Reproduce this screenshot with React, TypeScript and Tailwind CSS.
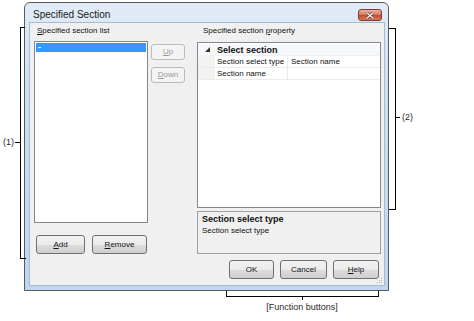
import React from 'react';

const font = { fontFamily: '"Liberation Sans", Arial, sans-serif' };

function Btn({ u, rest, w, disabled }: { u: string; rest: string; w: string; disabled?: boolean }) {
  return (
    <div
      className={
        'h-full flex items-center justify-center rounded-[3px] border text-[8px] ' +
        w +
        (disabled
          ? ' border-[#b8bcbf] bg-[#f4f4f4] text-[#9a9a9a]'
          : ' border-[#707070] bg-[linear-gradient(#f2f2f2_0%,#ebebeb_50%,#dddddd_51%,#cfcfcf_100%)] text-[#111]')
      }
    >
      <span>
        <span className="underline underline-offset-[1px]">{u}</span>
        {rest}
      </span>
    </div>
  );
}

export default function App() {
  return (
    <div className="relative w-[474px] h-[321px] bg-white overflow-hidden text-[#111]" style={font}>
      <div className="pt-[2px] pl-[24px]">
        {/* dialog window */}
        <div className="w-[365px] h-[289px] border border-[#5a5a5a] rounded-t-[6px] bg-[linear-gradient(#e2ecf7,#cfe0f2_30%,#bed6ef)] flex flex-col">
          {/* title bar */}
          <div className="h-[20px] flex items-start justify-between">
            <div className="pl-[8px] pt-[6px] text-[10px] leading-[12px] text-[#1a1a1a]">Specified Section</div>
            <div className="mt-[6px] mr-[6px] w-[24px] h-[12px] rounded-[3px] border border-[#7d3a2c] bg-[linear-gradient(#eab4a3,#d97c63_45%,#c44d30_55%,#da7b5e)] flex items-center justify-center">
              <svg width="8" height="7" viewBox="0 0 8 7">
                <path d="M1 1 L7 6 M7 1 L1 6" stroke="#5a2a20" strokeWidth="2.6" strokeLinecap="square" />
                <path d="M1 1 L7 6 M7 1 L1 6" stroke="#ffffff" strokeWidth="1.4" strokeLinecap="square" />
              </svg>
            </div>
          </div>

          <div className="flex pl-[5px] pr-[4px]">
            {/* client area */}
            <div className="relative w-[354px] h-[262px] bg-[#f0f0f0] shadow-[0_0_0_1px_#a7bcd3] flex flex-col">
              <div className="flex items-start">
                {/* left column */}
                <div className="ml-[4px] w-[114px] flex flex-col">
                  <div className="h-[16px] pl-[3px] text-[8px] leading-[16px]">
                    <span className="underline underline-offset-[1px]">S</span>pecified section list
                  </div>
                  <div className="mt-[2px] h-[182px] border border-[#828790] bg-white p-[1px]">
                    <div className="h-[9px] bg-[#3399ff] text-white text-[9px] leading-[8px] pl-[2px] font-bold">-</div>
                  </div>
                  <div className="mt-[12px] h-[19px] flex gap-[7px] pl-[2px]">
                    <Btn u="A" rest="dd" w="w-[49px]" />
                    <Btn u="R" rest="emove" w="w-[55px]" />
                  </div>
                </div>

                {/* middle column */}
                <div className="ml-[3px] w-[34px] pt-[21px] flex flex-col gap-[7px]">
                  <div className="h-[16px]">
                    <Btn u="U" rest="p" w="w-[34px]" disabled />
                  </div>
                  <div className="h-[16px]">
                    <Btn u="D" rest="own" w="w-[34px]" disabled />
                  </div>
                </div>

                {/* right column */}
                <div className="ml-[12px] w-[184px] flex flex-col">
                  <div className="h-[16px] pl-[6px] text-[8px] leading-[16px]">
                    Specified section <span className="underline underline-offset-[1px]">p</span>roperty
                  </div>
                  <div className="mt-[3px] h-[166px] border border-[#828790] bg-white pt-[1px] text-[8px]">
                    <div className="h-[12px] flex items-center bg-[#f6f8fb] border-b border-[#eef0f3]">
                      <div className="w-[17px] flex justify-center pl-[2px]">
                        <svg width="5" height="5" viewBox="0 0 5 5">
                          <polygon points="5,0 5,5 0,5" fill="#333" />
                        </svg>
                      </div>
                      <span className="pl-[2px] font-bold text-[9px] leading-[12px]">Select section</span>
                    </div>
                    {[
                      ['Section select type', 'Section name'],
                      ['Section name', ''],
                    ].map(([k, v]) => (
                      <div key={k} className="h-[12px] flex border-b border-[#ececec] leading-[11px]">
                        <div className="w-[17px] bg-[#f3f3f3]" />
                        <div className="w-[73px] pl-[2px] border-r border-[#ececec]">{k}</div>
                        <div className="pl-[3px]">{v}</div>
                      </div>
                    ))}
                  </div>
                  <div className="mt-[3px] h-[43px] border border-[#a0a0a0] bg-[#f0f0f0] pl-[4px] pt-[1px]">
                    <div className="font-bold text-[9px] leading-[12px]">Section select type</div>
                    <div className="text-[8px] leading-[12px]">Section select type</div>
                  </div>
                </div>
              </div>

              {/* function buttons */}
              <div className="mt-[6px] h-[19px] flex justify-end gap-[6px] pr-[5px]">
                <Btn u="" rest="OK" w="w-[45px]" />
                <Btn u="" rest="Cancel" w="w-[47px]" />
                <Btn u="H" rest="elp" w="w-[46px]" />
              </div>

              {/* size grip */}
              <svg className="absolute right-[1px] bottom-[1px]" width="7" height="7" viewBox="0 0 7 7">
                {[
                  [5, 1], [3, 3], [5, 3], [1, 5], [3, 5], [5, 5],
                ].map(([x, y]) => (
                  <rect key={`${x}-${y}`} x={x} y={y} width="1" height="1" fill="#b8b8b8" />
                ))}
              </svg>
            </div>
          </div>
        </div>
      </div>

      {/* annotations */}
      <div className="absolute left-[20px] top-[27px] w-[1px] h-[232px] bg-black" />
      <div className="absolute left-[20px] top-[27px] w-[5px] h-[1px] bg-black" />
      <div className="absolute left-[20px] top-[258px] w-[6px] h-[1px] bg-black" />
      <div className="absolute left-[15px] top-[142px] w-[5px] h-[1px] bg-black" />
      <div className="absolute left-[3px] top-[136px] text-[9px] leading-[12px] text-[#2a2a2a]">(1)</div>

      <div className="absolute left-[395px] top-[28px] w-[1px] h-[182px] bg-black" />
      <div className="absolute left-[389px] top-[28px] w-[6px] h-[1px] bg-black" />
      <div className="absolute left-[389px] top-[209px] w-[6px] h-[1px] bg-black" />
      <div className="absolute left-[395px] top-[117px] w-[5px] h-[1px] bg-black" />
      <div className="absolute left-[402px] top-[111px] text-[9px] leading-[12px] text-[#2a2a2a]">(2)</div>

      <div className="absolute left-[226px] top-[296px] w-[153px] h-[1px] bg-black" />
      <div className="absolute left-[226px] top-[291px] w-[1px] h-[5px] bg-black" />
      <div className="absolute left-[378px] top-[291px] w-[1px] h-[5px] bg-black" />
      <div className="absolute left-[302px] top-[296px] w-[1px] h-[4px] bg-black" />
      <div className="absolute left-[252px] top-[301px] w-[100px] text-center text-[9px] leading-[12px] text-[#2a2a2a]">[Function buttons]</div>
    </div>
  );
}
